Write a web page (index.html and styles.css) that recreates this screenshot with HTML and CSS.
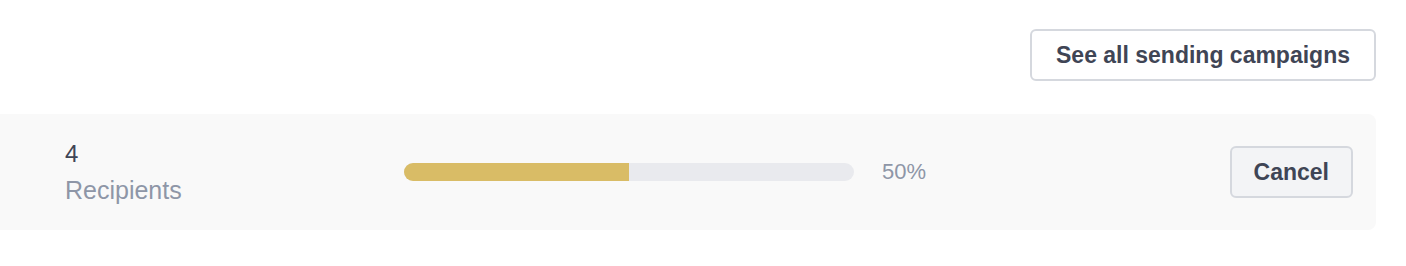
FILE: index.html
```html
<!DOCTYPE html>
<html lang="en">
<head>
<meta charset="utf-8">
<title>Sending campaign</title>
<link rel="stylesheet" href="styles.css">
</head>
<body>
  <div class="page">
    <div class="toolbar">
      <button class="btn btn-outline" type="button">See all sending campaigns</button>
    </div>
    <div class="campaign-row">
      <div class="stat">
        <div class="stat-value">4</div>
        <div class="stat-label">Recipients</div>
      </div>
      <div class="progress">
        <div class="progress-track">
          <div class="progress-fill" style="width: 50%"></div>
        </div>
        <span class="progress-text">50%</span>
      </div>
      <button class="btn btn-muted btn-cancel" type="button">Cancel</button>
    </div>
  </div>
</body>
</html>
```

FILE: styles.css
```css
* { box-sizing: border-box; }

html, body {
  margin: 0;
  padding: 0;
  background: #ffffff;
  font-family: "Liberation Sans", Arial, Helvetica, sans-serif;
}

.page {
  width: 1376px;
  padding-top: 29px;
}

.toolbar {
  display: flex;
  justify-content: flex-end;
}

.btn {
  height: 52px;
  padding: 0 24px;
  border: 2px solid #d5d8de;
  border-radius: 6px;
  font-family: "Liberation Sans", Arial, Helvetica, sans-serif;
  font-size: 23px;
  font-weight: 700;
  color: #3f4555;
  cursor: pointer;
  white-space: nowrap;
}

.btn-outline {
  background: #ffffff;
}

.btn-muted {
  background: #f3f4f6;
}

.btn-cancel {
  padding: 0 22px;
}

.campaign-row {
  margin-top: 33px;
  height: 116px;
  background: #f9f9f9;
  border-radius: 0 8px 8px 0;
  display: flex;
  align-items: center;
  padding: 0 23px 0 65px;
}

.stat {
  width: 339px;
  flex: none;
  line-height: 36px;
  font-size: 24px;
}

.stat-value {
  color: #3f4555;
}

.stat-label {
  font-size: 25px;
  color: #8e96a7;
}

.progress {
  flex: 1;
  display: flex;
  align-items: center;
  gap: 28px;
}

.progress-track {
  width: 450px;
  height: 18px;
  background: #e9eaee;
  border-radius: 9px;
  overflow: hidden;
}

.progress-fill {
  height: 100%;
  background: #d9bc66;
}

.progress-text {
  font-size: 22px;
  color: #8e96a7;
}
```
